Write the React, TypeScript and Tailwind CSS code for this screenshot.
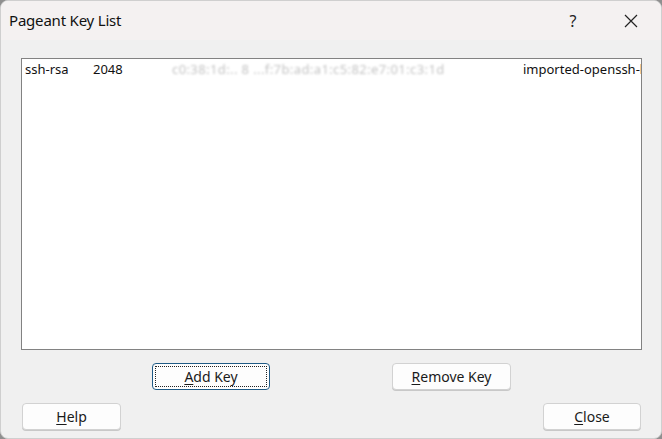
import React from "react";

const Btn = ({ label, ul, focused, className }: { label: string; ul: number; focused?: boolean; className: string }) => (
  <button
    className={`h-[27px] rounded-[4px] bg-[#fdfdfd] text-[14px] text-[#1a1a1a] flex items-center justify-center ${
      focused ? "border border-[#1f5a85] p-[2px]" : "border border-[#d2d2d2] shadow-[0_1px_0_#c8c8c8]"
    } ${className}`}
  >
    <span
      className={`w-full h-full flex items-center justify-center ${focused ? "border border-dotted border-[#222]" : ""}`}
    >
      <span>
        <span className="underline underline-offset-2">{label.slice(0, ul)}</span>
        {label.slice(ul)}
      </span>
    </span>
  </button>
);

export default function App() {
  return (
    <div
      className="w-[662px] h-[439px] bg-[#8f8f8f] overflow-hidden"
      style={{ fontFamily: '"Noto Sans", "Open Sans", sans-serif' }}
    >
      <div className="w-[662px] h-[439px] rounded-[8px] border border-[#cfcfcf] bg-[#f0f0f0] flex flex-col overflow-hidden">
        {/* Title bar */}
        <div className="h-[39px] flex items-center bg-[#f4f1f1] shrink-0">
          <span className="pl-[8px] text-[15px] text-[#111] tracking-[-0.2px]">Pageant Key List</span>
          <div className="ml-auto flex items-center gap-[12px] mr-[7px]">
            <span className="w-[46px] text-center text-[16px] text-[#222]">?</span>
            <span className="w-[46px] h-[30px] flex items-center justify-center">
              <svg width="14" height="14" viewBox="0 0 14 14" fill="none" stroke="#222" strokeWidth="1.2">
                <path d="M1 1L13 13M13 1L1 13" />
              </svg>
            </span>
          </div>
        </div>

        {/* Body */}
        <div className="flex flex-col pl-[20px] pr-[19px] pt-[18px]">
          <div className="h-[292px] bg-white border border-[#828282] overflow-hidden">
            <div className="h-[22px] text-[13px] text-[#111] flex items-center whitespace-nowrap">
              <span className="shrink-0 ml-[3px] w-[68px]">ssh-rsa</span>
              <span className="shrink-0 w-[79px]">2048</span>
              <span className="shrink-0 w-[351px] overflow-hidden text-[#c4c4c4] blur-[0.8px] tracking-[0.4px]">
                c0:38:1d:.. 8 ...f:7b:ad:a1:c5:82:e7:01:c3:1d
              </span>
              <span className="shrink-0">imported-openssh-key</span>
            </div>
          </div>

          <div className="flex mt-[13px] ml-[131px] gap-[122px]">
            <Btn label="Add Key" ul={1} focused className="w-[118px]" />
            <Btn label="Remove Key" ul={1} className="w-[119px]" />
          </div>

          <div className="flex justify-between mt-[13px] ml-[1px] mr-[1px]">
            <Btn label="Help" ul={1} className="w-[99px]" />
            <Btn label="Close" ul={1} className="w-[98px]" />
          </div>
        </div>
      </div>
    </div>
  );
}
